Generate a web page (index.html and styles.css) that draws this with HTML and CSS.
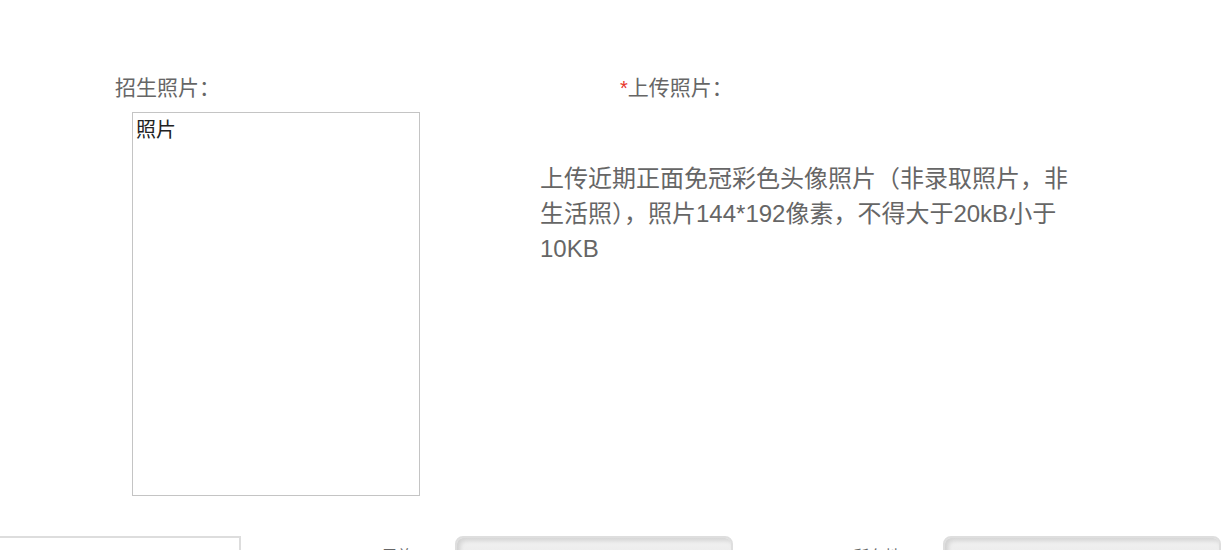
FILE: index.html
```html
<!DOCTYPE html>
<html lang="zh-CN">
<head>
    <meta charset="UTF-8">
    <meta name="viewport" content="width=device-width, initial-scale=1.0">
    <title>上传照片</title>
    <link rel="stylesheet" href="styles.css">
</head>
<body>
    <div id="form">
        <div class="photo-row">
            <div class="col-left">
                <div class="field-label">招生照片：</div>
                <div class="photo-box">照片</div>
            </div>
            <div class="col-right">
                <div class="field-label upload-label"><span class="required">*</span>上传照片：</div>
                <p class="photo-tip">上传近期正面免冠彩色头像照片（非录取照片，非生活照），照片144*192像素，不得大于20kB小于10KB</p>
            </div>
        </div>
        <div class="info-row">
            <input type="text" class="text-input" value="">
            <label class="row-label">民族：</label>
            <div class="select-box"><span>请选择</span><span class="arrow">▾</span></div>
            <label class="row-label">所在地：</label>
            <div class="select-box"><span>请选择所在地区</span><span class="arrow">▾</span></div>
        </div>
    </div>
</body>
</html>
```

FILE: styles.css
```css
body {
    font-family: "Liberation Sans", "Noto Sans CJK SC", sans-serif;
    background-color: #fff;
    color: #666;
    margin: 0;
    padding: 0;
    overflow: hidden;
}
#form {
    width: 1222px;
    height: 550px;
    overflow: hidden;
}
.photo-row {
    display: flex;
    padding-top: 76px;
    height: 420px;
}
.col-left {
    width: 540px;
}
.field-label {
    font-family: "Liberation Sans", "Noto Sans CJK TC", sans-serif;
    font-size: 21px;
    line-height: 24px;
    color: #666;
    padding-left: 115px;
}
.photo-box {
    margin: 12px 0 0 132px;
    width: 283px;
    height: 382px;
    border: 1px solid #c4c4c4;
    color: #222;
    font-size: 20px;
    line-height: 34px;
    padding-left: 3px;
    box-sizing: content-box;
}
.col-right {
    flex: 1;
}
.upload-label {
    padding-left: 80px;
}
.required {
    color: #e8352b;
    font-size: 20px;
}
.photo-tip {
    margin: 61px 0 0 0;
    width: 534px;
    font-size: 24px;
    line-height: 35px;
    color: #666;
}
.info-row {
    display: flex;
    align-items: flex-start;
    margin-top: 40px;
}
.text-input {
    margin: 0 0 0 -4px;
    width: 245px;
    height: 40px;
    border: 2px solid #ddd;
    box-sizing: border-box;
}
.row-label {
    font-size: 16px;
    line-height: 24px;
    color: #666;
    text-align: right;
    padding-top: 9px;
    padding-right: 25px;
}
.row-label:nth-of-type(1) {
    width: 189px;
}
.row-label:nth-of-type(2) {
    width: 184px;
    padding-right: 26px;
}
.select-box {
    display: flex;
    justify-content: space-between;
    width: 278px;
    height: 40px;
    box-sizing: border-box;
    border: 2px solid #dedede;
    border-radius: 8px;
    background: linear-gradient(#f2f2f2, #e4e4e4);
    box-shadow: inset 3px 3px 4px rgba(0,0,0,0.12);
    padding: 8px 18px 0 20px;
    font-size: 16px;
    color: #777;
}
.arrow {
    color: #555;
}
```
